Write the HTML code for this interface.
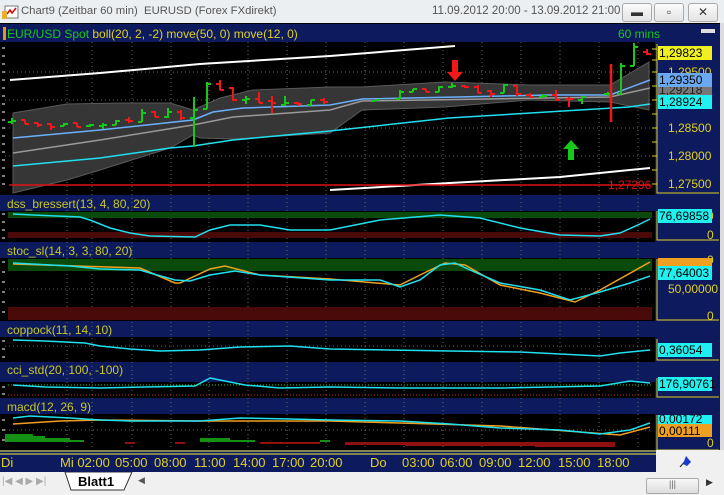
<!DOCTYPE html>
<html><head><meta charset="utf-8"><style>
body{margin:0;width:724px;height:495px;overflow:hidden;background:#f0f0f0;font-family:"Liberation Sans",sans-serif;position:relative}
.a{position:absolute}
.btn{position:absolute;top:3px;width:28px;height:17px;border:1px solid #aaa;border-radius:3px;background:linear-gradient(#fbfbfb,#e4e4e4);font-size:12px;text-align:center;line-height:16px;color:#333}
</style></head><body>
<div class="a" style="left:0;top:0;width:724px;height:23px;background:#eceff2"></div>
<svg class="a" style="left:2px;top:3px" width="18" height="17"><rect x="3" y="3" width="13" height="12" fill="#fff" stroke="#777"/><path d="M5 11 L8 7 L10 10 L14 5" stroke="#d00" fill="none" stroke-width="1.5"/><rect x="0" y="8" width="5" height="8" fill="#e6b030"/></svg>
<div class="a" style="left:21px;top:5px;font-size:11.3px;color:#555">Chart9 (Zeitbar 60 min)&nbsp; EURUSD (Forex FXdirekt)</div>
<div class="a" style="left:432px;top:5px;font-size:11.5px;color:#555">11.09.2012 20:00 - 13.09.2012 21:00</div>
<div class="btn" style="left:622px">▬</div><div class="btn" style="left:654px">▫</div><div class="btn" style="left:688px">✕</div>

<svg class="a" style="left:0;top:23px" width="724" height="449" viewBox="0 23 724 449" font-family="Liberation Sans" font-size="12">
<rect x="0" y="23" width="720" height="449" fill="#000"/>
<rect x="720" y="23" width="4" height="449" fill="#dcdcdc"/>
<g fill="#0d1a5e">
<rect x="0" y="24" width="720" height="18"/><rect x="0" y="195" width="720" height="16"/><rect x="0" y="242" width="720" height="16"/>
<rect x="0" y="321" width="720" height="16"/><rect x="0" y="362" width="720" height="20"/><rect x="0" y="398" width="720" height="16"/>
<rect x="655" y="42" width="65" height="410"/>
</g>
<g stroke="#666" stroke-dasharray="1,3">
<path d="M67 42V450M92 42V450M132 42V450M171 42V450M209 42V450M248 42V450M287 42V450M326 42V450M365 42V450M404 42V450M443 42V450M482 42V450M521 42V450M560 42V450M599 42V450M638 42V450"/>
<path d="M5 72H652M5 100H652M5 128H652M5 156H652M5 289H652M5 346H652M5 430H652"/>
</g>
<path d="M13 113 L67 104 L123 103 L170 103 L193 110 L220 98 L253 90 L330 87 L362 87 L445 82 L529 85 L610 85 L649 62 L649 110 L610 102 L529 100 L445 107 L362 110 L330 133 L233 139 L200 138 L193 135 L170 148 L100 170 L67 180 L13 193Z" fill="#363636" stroke="#5a5a5a"/>
<rect x="3" y="27" width="3" height="13" fill="#f0901c"/>
<text x="7" y="38" fill="#18c818">EUR/USD Spot <tspan fill="#e0d020">boll(20, 2, -2) move(50, 0) move(12, 0)</tspan></text>
<text x="618" y="38" fill="#18c818">60 mins</text>
<rect x="701" y="29" width="14" height="4" fill="#ddd"/>
<g fill="#c8c820">
<text x="7" y="208">dss_bressert(13, 4, 80, 20)</text><text x="7" y="255">stoc_sl(14, 3, 3, 80, 20)</text>
<text x="7" y="334">coppock(11, 14, 10)</text><text x="7" y="374">cci_std(20, 100, -100)</text><text x="7" y="411">macd(12, 26, 9)</text>
</g>
<g stroke="#fff"><path d="M2 48h3M2 56h3M2 64h3M2 72h3M2 80h3M2 88h3M2 96h3M2 104h3M2 112h3M2 120h3M2 128h3M2 136h3M2 144h3M2 152h3M2 160h3M2 168h3M2 176h3M2 184h3M2 214h3M2 222h3M2 230h3M2 238h3M2 262h3M2 272h3M2 282h3M2 292h3M2 302h3M2 312h3M2 341h3M2 349h3M2 357h3M2 387h3M2 394h3M2 420h3M2 430h3M2 440h3"/></g>
<path d="M10 80 L100 73 L200 64 L330 56 L455 46" stroke="#fff" stroke-width="2" fill="none"/>
<path d="M330 190 L450 183 L560 177 L650 168" stroke="#fff" stroke-width="2" fill="none"/>
<path d="M9 185H650" stroke="#e01010" stroke-width="1.5"/>
<path d="M13 153 L100 140 L193 125 L233 117 L330 110 L362 101 L610 97 L650 88" stroke="#999" stroke-width="1.5" fill="none"/>
<path d="M13 138 L100 130 L193 120 L213 112 L243 108 L330 105 L362 99 L550 95 L610 95 L650 80" stroke="#6ab0ff" stroke-width="1.5" fill="none"/>
<path d="M13 166 L100 158 L170 148 L193 146 L233 140 L330 131 L449 118 L629 107 L650 104" stroke="#20e0f0" stroke-width="1.5" fill="none"/>
<g stroke-width="2" fill="none">
<g stroke="#18c818">
<path d="M12 118V124M8 122H12M12 121H16"/><path d="M64 123V126M60 126H64M64 124H68"/><path d="M90 124V127M86 126H90M90 125H94"/><path d="M103 123V129M99 126H103M103 125H107"/><path d="M116 120V125M112 125H116M116 121H120"/><path d="M142 109V122M138 122H142M142 113H146"/><path d="M168 108V118M164 117H168M168 112H172"/><path d="M194 97V147M190 118H194M194 110H198"/><path d="M207 82V109M203 109H207M207 84H211"/><path d="M246 96V104M242 100H246M246 99H250"/><path d="M285 96V106M281 105H285M285 103H289"/><path d="M311 100V105M307 105H311M311 100H315"/><path d="M375 100V101M371 101H375M375 100H379"/><path d="M400 90V99M396 99H400M400 92H404"/><path d="M413 89V92M409 92H413M413 89H417"/><path d="M439 86V92M435 92H439M439 87H443"/><path d="M452 83V88M448 87H452M452 86H456"/><path d="M504 84V93M500 93H504M504 85H508"/><path d="M543 94V97M539 97H543M543 96H547"/><path d="M582 96V104M578 100H582M582 97H586"/><path d="M608 92V96M604 94H608M608 94H612"/><path d="M621 63V94M617 94H621M621 66H625"/><path d="M634 43V66M630 66H634M634 47H638"/>
</g>
<g stroke="#f01818">
<path d="M25 120V124M21 120H25M25 124H29"/><path d="M38 123V127M34 123H38M38 125H42"/><path d="M51 124V130M47 124H51M51 127H55"/><path d="M77 123V127M73 123H77M77 127H81"/><path d="M129 117V123M125 120H129M129 121H133"/><path d="M155 111V117M151 112H155M155 117H159"/><path d="M181 110V120M177 112H181M181 118H185"/><path d="M220 80V90M216 84H220M220 90H224"/><path d="M233 87V101M229 88H233M233 100H237"/><path d="M259 92V103M255 99H259M259 103H263"/><path d="M272 96V113M268 101H272M272 103H276"/><path d="M298 102V106M294 103H298M298 104H302"/><path d="M324 98V104M320 100H324M324 102H328"/><path d="M426 89V92M422 89H426M426 92H430"/><path d="M465 85V88M461 86H465M465 87H469"/><path d="M478 85V93M474 87H478M478 93H482"/><path d="M491 90V97M487 91H491M491 94H495"/><path d="M517 85V96M513 86H517M517 94H521"/><path d="M530 93V98M526 95H530M530 97H534"/><path d="M556 90V100M552 95H556M556 100H560"/><path d="M569 97V107M565 99H569M569 99H573"/><path d="M647 49V55M643 52H647M647 54H651"/>
</g>
<path d="M611 64V122" stroke="#f01818" stroke-width="2.5"/>
</g>
<path d="M452 60h6v12h5l-8 9-8-9h5z" fill="#f01818"/>
<path d="M571 140l8 9h-5v11h-6v-11h-5z" fill="#18c818"/>
<text x="608" y="189" fill="#e01010">1,27296</text>
<path d="M657 44V193H719" stroke="#e0d020" fill="none"/>
<g stroke="#e0d020"><path d="M652 49h5M652 60h5M652 72h5M652 86h5M652 100h5M652 114h5M652 128h5M652 142h5M652 156h5M652 170h5M652 184h5"/></g>
<g fill="#e0d020" font-size="12"><text x="668" y="76">1,29500</text><text x="668" y="104">1,29000</text><text x="668" y="132">1,28500</text><text x="668" y="160">1,28000</text><text x="668" y="188">1,27500</text></g>
<rect x="658" y="84" width="54" height="12" fill="#777"/><text x="659" y="94" fill="#222">1,29218</text>
<rect x="658" y="46" width="54" height="14" fill="#f0f020"/><text x="659" y="57" fill="#000">1,29823</text>
<rect x="658" y="73" width="54" height="14" fill="#6aa8f0"/><text x="659" y="84" fill="#000">1,29350</text>
<rect x="658" y="95" width="54" height="14" fill="#20f0f0"/><text x="659" y="106" fill="#000">1,28924</text>
<rect x="8" y="212" width="644" height="6" fill="#0a4a0a"/><rect x="8" y="232" width="644" height="6" fill="#4a0a0a"/>
<path d="M13 214 L33 215 L80 217 L90 220 L110 228 L130 233 L150 236 L195 237 L210 230 L230 225 L260 225 L290 230 L330 230 L380 220 L440 215 L480 218 L520 228 L560 235 L600 236 L620 233 L640 224 L650 219" stroke="#20e0f0" stroke-width="1.5" fill="none"/>
<path d="M657 211V240H719" stroke="#e0d020" fill="none"/>
<text x="707" y="220" fill="#e0d020">0</text>
<rect x="658" y="209" width="54" height="14" fill="#20f0f0"/><text x="659" y="220" fill="#000">76,69858</text>
<text x="707" y="239" fill="#e0d020">0</text>
<rect x="8" y="259" width="644" height="12" fill="#0a4a0a"/><rect x="8" y="307" width="644" height="13" fill="#4a0a0a"/>
<path d="M13 264 L140 268 L175 283 L180 283 L210 269 L225 266 L260 275 L330 279 L400 285 L420 275 L445 263 L465 265 L500 285 L540 293 L575 302 L600 290 L650 262" stroke="#f0a020" stroke-width="1.5" fill="none"/>
<path d="M13 263 L70 266 L100 269 L140 270 L150 273 L175 280 L190 281 L210 275 L235 271 L260 275 L330 280 L380 280 L400 287 L420 280 L440 265 L455 263 L470 270 L500 283 L540 290 L570 300 L600 292 L630 283 L650 276" stroke="#20e0f0" stroke-width="1.5" fill="none"/>
<path d="M657 259V320H719" stroke="#e0d020" fill="none"/>
<text x="707" y="264" fill="#e0d020">0</text>
<rect x="658" y="258" width="54" height="8" fill="#f0a020"/>
<rect x="658" y="266" width="54" height="14" fill="#20f0f0"/><text x="659" y="277" fill="#000">77,64003</text>
<text x="668" y="293" fill="#e0d020">50,00000</text><text x="707" y="320" fill="#e0d020">0</text>
<path d="M13 340 L45 341 L85 343 L100 346 L130 349 L160 351 L200 350 L240 347 L290 346 L330 349 L450 351 L520 352 L600 356 L620 353 L650 350" stroke="#20e0f0" stroke-width="1.5" fill="none"/>
<path d="M657 339V360H719" stroke="#e0d020" fill="none"/>
<text x="668" y="353" fill="#e0d020">0,00000</text>
<rect x="658" y="343" width="54" height="14" fill="#20f0f0"/><text x="659" y="354" fill="#000">0,36054</text>
<path d="M8 385H652" stroke="#20d020" stroke-dasharray="1,2"/><path d="M8 395H652" stroke="#d02020" stroke-dasharray="1,2"/>
<path d="M13 385 L45 387 L100 388 L195 386 L210 378 L230 382 L245 385 L280 388 L330 387 L400 388 L500 388 L600 386 L630 381 L650 383" stroke="#20e0f0" stroke-width="1.5" fill="none"/>
<path d="M657 378V397H719" stroke="#e0d020" fill="none"/>
<rect x="658" y="377" width="54" height="14" fill="#20f0f0"/><text x="659" y="388" fill="#000">176,90761</text>
<g fill="#149014"><rect x="5" y="434" width="28" height="8"/><rect x="33" y="436" width="12" height="6"/><rect x="45" y="438" width="25" height="4"/><rect x="70" y="440" width="14" height="2"/><rect x="200" y="438" width="30" height="4"/><rect x="230" y="440" width="25" height="2"/><rect x="320" y="440" width="10" height="2"/></g>
<g fill="#901010"><rect x="125" y="442" width="10" height="2"/><rect x="175" y="442" width="10" height="2"/><rect x="260" y="442" width="60" height="2"/><rect x="345" y="442" width="60" height="3"/><rect x="405" y="442" width="130" height="4"/><rect x="535" y="442" width="80" height="5"/></g>
<path d="M13 424 L60 421 L100 420 L200 421 L330 421 L400 423 L500 426 L580 432 L620 435 L650 427" stroke="#f0a020" stroke-width="1.5" fill="none"/>
<path d="M13 418 L30 416 L70 418 L100 420 L130 421 L200 421 L240 418 L290 419 L330 420 L400 421 L450 424 L500 428 L560 430 L600 434 L630 430 L650 423" stroke="#20e0f0" stroke-width="1.5" fill="none"/>
<path d="M657 415V450H719" stroke="#e0d020" fill="none"/>
<text x="668" y="426" fill="#e0d020">0,00000</text>
<rect x="658" y="415" width="54" height="9" fill="#20f0f0"/><text x="659" y="423" fill="#000">0,00172</text>
<rect x="658" y="424" width="54" height="13" fill="#f0a020"/><text x="659" y="435" fill="#000">0,00111</text>
<text x="707" y="447" fill="#e0d020">0</text>
<rect x="0" y="450" width="656" height="22" fill="#0d1a5e"/>
<path d="M0 451H656M0 454H656" stroke="#f0f040"/>
<rect x="656" y="450" width="68" height="22" fill="#f0f0f0"/>
<g fill="#e0d020" font-size="13"><text x="1" y="467">Di</text><text x="60" y="467">Mi 02:00</text><text x="115" y="467">05:00</text><text x="154" y="467">08:00</text><text x="194" y="467">11:00</text><text x="233" y="467">14:00</text><text x="272" y="467">17:00</text><text x="310" y="467">20:00</text><text x="370" y="467">Do</text><text x="402" y="467">03:00</text><text x="440" y="467">06:00</text><text x="479" y="467">09:00</text><text x="518" y="467">12:00</text><text x="558" y="467">15:00</text><text x="597" y="467">18:00</text></g>
<path d="M680 467l7-8" stroke="#222"/><path d="M686 456l5 6-4 4-4-2z" fill="#1a3ad0"/>
</svg>
<div class="a" style="left:0;top:472px;width:724px;height:23px;background:#f0f0f0"></div>
<div class="a" style="left:2px;top:476px;white-space:nowrap;color:#aaa;font-size:10px">|◀ ◀ ▶ ▶|</div>
<svg class="a" style="left:62px;top:472px" width="75" height="20"><path d="M3 0L9 18H62L70 0Z" fill="#fff" stroke="#333"/></svg>
<div class="a" style="left:78px;top:474px;font-size:13px;font-weight:bold;color:#000">Blatt1</div>
<div class="a" style="left:138px;top:475px;font-size:9px;color:#555">◀</div>
<div class="a" style="left:646px;top:478px;width:51px;height:14px;border:1px solid #aaa;border-radius:2px;background:linear-gradient(#f8f8f8,#ddd);font-size:9px;text-align:center;color:#666">|||</div>
<div class="a" style="left:706px;top:477px;font-size:9px;color:#333">▶</div>
</body></html>
